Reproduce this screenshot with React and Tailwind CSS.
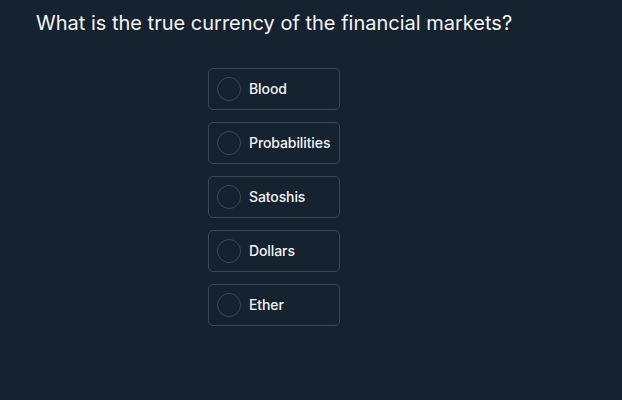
const options = ["Blood", "Probabilities", "Satoshis", "Dollars", "Ether"];

export default function App() {
  return (
    <div
      className="w-[622px] h-[400px] bg-[#15222f] text-white overflow-hidden"
      style={{ fontFamily: "Inter, 'Noto Sans', sans-serif" }}
    >
      <h1 className="pl-[36px] pt-[9px] text-[20px] leading-[28px] font-normal text-[#f3f4f6]">
        What is the true currency of the financial markets?
      </h1>
      <div className="flex flex-col gap-[12px] ml-[208px] mt-[31px]">
        {options.map((opt) => (
          <button
            key={opt}
            className="w-[132px] h-[42px] flex items-center gap-[8px] pl-[8px] border border-[#3b4754] rounded-[5px] text-left"
          >
            <span className="w-[24px] h-[24px] rounded-full border border-[#3b4754] shrink-0" />
            <span className="text-[14px] font-medium text-[#f3f4f6] tracking-[-0.1px] pb-[2px]">{opt}</span>
          </button>
        ))}
      </div>
    </div>
  );
}
